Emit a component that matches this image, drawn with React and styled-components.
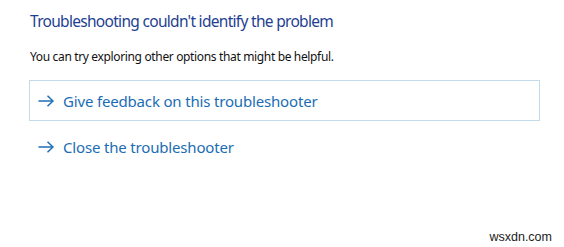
import styled, { createGlobalStyle } from 'styled-components';

const GlobalStyle = createGlobalStyle`
  html, body {
    margin: 0;
    background: #ffffff;
  }
  body {
    font-family: "Noto Sans", "Open Sans", sans-serif;
  }
`;

const Page = styled.div`
  position: relative;
  width: 564px;
  height: 247px;
  box-sizing: border-box;
  padding: 9px 24px 0 29px;
  display: flex;
  flex-direction: column;
  background: #fff;
`;

const Title = styled.h1`
  margin: 0;
  font-weight: 400;
  font-size: 15.5px;
  letter-spacing: -0.7px;
  line-height: 24px;
  color: #1f3f91;
  padding-left: 1px;
`;

const Hint = styled.p`
  margin: 16px 0 0;
  font-size: 12px;
  letter-spacing: -0.35px;
  line-height: 16px;
  color: #111;
  padding-left: 1px;
`;

const Options = styled.div`
  margin-top: 15px;
  display: flex;
  flex-direction: column;
  gap: 5px;
`;

const Option = styled.a`
  display: flex;
  align-items: center;
  gap: 9px;
  height: 41px;
  box-sizing: border-box;
  padding: 0 8px;
  border: 1px solid ${({ focused }) => (focused ? '#c3dbe9' : 'transparent')};
  color: #1a6db4;
  font-size: 15px;
  letter-spacing: -0.17px;
  text-decoration: none;
  cursor: pointer;
`;

const Arrow = styled.svg`
  width: 16px;
  height: 12px;
  flex: none;
`;

const Watermark = styled.span`
  position: absolute;
  right: 12px;
  bottom: 3px;
  font-family: "Liberation Sans", Arial, sans-serif;
  font-size: 12.5px;
  color: #222;
`;

function ArrowIcon() {
  return (
    <Arrow viewBox="0 0 16 12" fill="none" stroke="currentColor" strokeWidth="1.5">
      <path d="M0.5 6 H15" />
      <path d="M9.5 0.8 L15 6 L9.5 11.2" />
    </Arrow>
  );
}

export default function App() {
  return (
    <>
      <GlobalStyle />
      <Page>
        <Title>Troubleshooting couldn't identify the problem</Title>
        <Hint>You can try exploring other options that might be helpful.</Hint>
        <Options>
          <Option focused>
            <ArrowIcon />
            Give feedback on this troubleshooter
          </Option>
          <Option>
            <ArrowIcon />
            Close the troubleshooter
          </Option>
        </Options>
        <Watermark>wsxdn.com</Watermark>
      </Page>
    </>
  );
}
